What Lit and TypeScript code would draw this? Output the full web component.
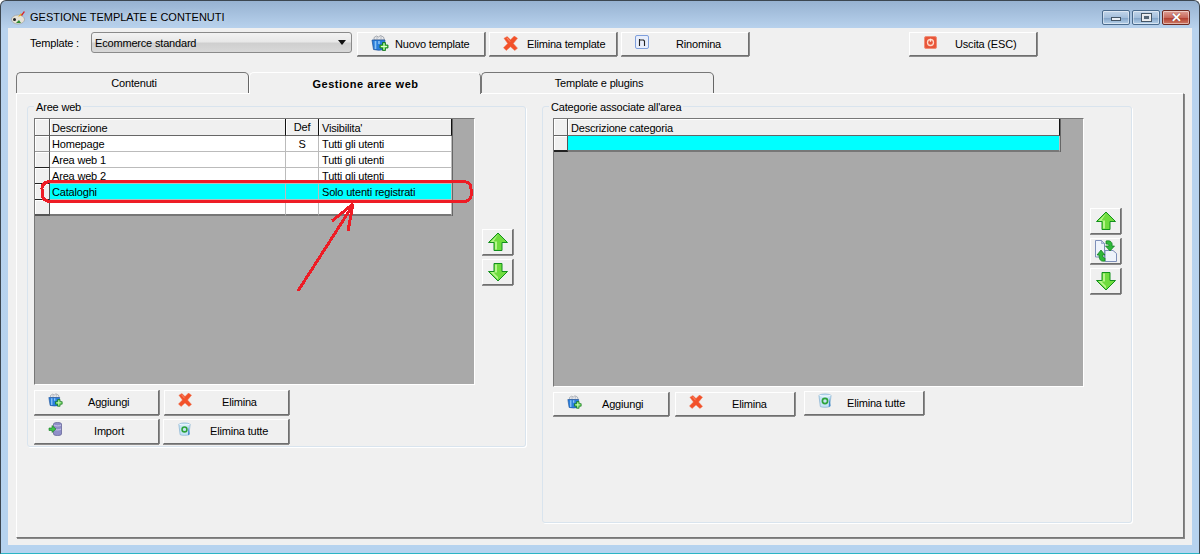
import { LitElement, html, css, svg } from "lit";
import { customElement } from "lit/decorators.js";

const icons: Record<string, any> = {
  box: svg`<svg class="ico" width="18" height="16" viewBox="0 0 18 16"><path d="M3 5V2.500l2.500-1.500 2 1 2-1.500 3 1.500 1 3z" fill="#e6e8ec" stroke="#8a8f98" stroke-width=".7"/><path d="M6 1.500v3M10 1v3" stroke="#a9adb5" stroke-width=".8"/><path d="M1 5h13l-1 9.500q-5 1.500-10.500 0z" fill="#2b7fdc" stroke="#1b4f96" stroke-width=".7"/><path d="M4.500 6v8M8 6v3" stroke="#8cc4f4" stroke-width="1.600"/><path d="M11.500 7.500h3v2.500H17v3h-2.500v2.500h-3V13H9v-3h2.500z" fill="#5ad24a" stroke="#0d6e18" stroke-width=".8"/><path d="M12.500 8.500h1v2.500h2.500v1h-2.500v2.500h-1V12H10v-1h2.500z" fill="#e0fbd0"/></svg>`,
  x: svg`<svg class="ico" width="16" height="16" viewBox="0 0 16 16"><path d="M1 2.500L4.500 .5 8 4l4-4 3.500 2.500L11 8l4.500 5-3 2.500L8 11.500l-4.500 4L.5 12.500 5 8z" fill="#f2512a" stroke="#f07a58" stroke-width=".5"/><path d="M4 2l3.500 4" stroke="#f9967a" stroke-width="1"/></svg>`,
  n: svg`<svg class="ico" width="14" height="14" viewBox="0 0 14 14"><rect x=".5" y=".5" width="13" height="13" rx="1.500" fill="#e8eefb" stroke="#7f9fdc"/><path d="M4.500 4v7M4.500 5h4l1 1v5" fill="none" stroke="#222" stroke-width="1.100"/></svg>`,
  exit: svg`<svg class="ico" width="13" height="13" viewBox="0 0 13 13"><rect x=".5" y=".5" width="12" height="12" rx="1.500" fill="#e8563a" stroke="#ef8f78"/><circle cx="6.500" cy="6.500" r="3" fill="none" stroke="#ffd9c8" stroke-width="1.300"/><path d="M6.500 2.800v3" stroke="#ffe8dc" stroke-width="1.300"/></svg>`,
  db: svg`<svg class="ico" width="14" height="14" viewBox="0 0 14 14"><path d="M5 2c0-2 8-2 8 0v10c0 2-8 2-8 0z" fill="#8f8fc8" stroke="#5c5c90" stroke-width=".7"/><path d="M5.500 3c1 1.200 6 1.200 7 0M5.500 7c1 1.200 6 1.200 7 0" fill="none" stroke="#d8d8f0" stroke-width=".8"/><path d="M.5 6h3V3.500l4 3.500-4 3.500V8.500h-3z" fill="#3fc24a" stroke="#137a20" stroke-width=".6"/></svg>`,
  trash: svg`<svg class="ico" width="14" height="15" viewBox="0 0 15 16"><path d="M1 2.500c3-2 10-2 13 0l-1.500 12c-2 1-8 1-10 0z" fill="#c6e4f6" stroke="#7aa9cc" stroke-width=".7"/><path d="M1.500 2.500c3 1.200 9 1.200 12 0" fill="none" stroke="#fff" stroke-width="1"/><circle cx="7.500" cy="8.500" r="2.800" fill="none" stroke="#2da33a" stroke-width="1.800"/><path d="M12 5l1.500 9-2 1z" fill="#3f87cc"/></svg>`,
  up: svg`<svg class="ico" width="20" height="20" viewBox="0 0 20 20"><path d="M10 1l9.500 9.500h-5.500v8h-8v-8H.5z" fill="#6fdc3e" stroke="#12911c" stroke-width="1"/><path d="M10 2.500L2.500 10h4.500v7.500H9V9.500H5.500z" fill="#b7f58c"/></svg>`,
  down: svg`<svg class="ico" width="20" height="20" viewBox="0 0 20 20"><path d="M10 19l9.500-9.500h-5.500v-8h-8v8H.5z" fill="#6fdc3e" stroke="#12911c" stroke-width="1"/><path d="M7 2.500h2v8H5.500L10 15V17.500L2.500 10H7z" fill="#b7f58c"/></svg>`,
  swap: svg`<svg class="ico" width="22" height="22" viewBox="0 0 22 22"><path d="M.5.5h6l3 3v13.500h-9z" fill="#eef3fb" stroke="#7d8fb8"/><path d="M6.500.5v3h3z" fill="#c2cde4" stroke="#7d8fb8" stroke-width=".6"/><path d="M10 10.500h8l3.500 3v8H10z" fill="#eef3fb" stroke="#7d8fb8"/><path d="M11 1c4-1 7 1 6 5h2.500l-4.500 5-4.500-5H14c0-1.500-1-2-3-2z" fill="#2fb83a" stroke="#107a1c" stroke-width=".7"/><path d="M10 21c-4 1-6-1-6-6H2l4-5 4 5H7.500c0 2 1 3 2.500 3z" fill="#2fb83a" stroke="#107a1c" stroke-width=".7"/></svg>`,
  app: svg`<svg width="16" height="16" viewBox="0 0 16 16"><ellipse cx="8" cy="9.500" rx="6.500" ry="4.500" fill="#e6e2d6" stroke="#888" stroke-width=".5"/><circle cx="4.500" cy="9.500" r="1.500" fill="#222"/><path d="M6 13l3-3 2 3z" fill="#2b8a2f"/><path d="M8 7l3-4 1 2z" fill="#e8b020"/><path d="M11 5l3-4 .8 1-2.800 4z" fill="#d8202a"/></svg>`,
};

const btn = (cls: string, icon: string, label: string) => html`
  <div class="btn ${cls}"><span class="bi">${icons[icon]}</span><span class="bl">${label}</span></div>`;

@customElement("app-root")
export class AppRoot extends LitElement {
  static styles = css`
    :host { display: block; width: 1200px; height: 554px; overflow: hidden; position: relative;
      font: 11px "Liberation Sans", Arial, sans-serif; letter-spacing: -.18px; color: #000; }
    .win { height: 554px; box-sizing: border-box; display: flex; flex-direction: column;
      background: linear-gradient(180deg, #97b2d1 0, #b9d3ee 28px, #b6d3ef 100%);
      border: 1px solid #3c4650; border-bottom-color: #2bb4c4; border-radius: 6px 6px 0 0; }
    .title { height: 27px; flex: none; display: flex; align-items: center; padding: 0 6px 0 9px; }
    .title svg { margin-right: 4px; margin-top: 6px; }
    .title .t { flex: 1; margin-top: 4px; letter-spacing: 0; text-shadow: 0 0 6px rgba(255,255,255,.6); }
    .wbs { display: flex; gap: 2px; margin-top: 6px; margin-right: 3px; }
    .wb { width: 26px; height: 13px; border: 1px solid #4a6a8c; border-radius: 2px; display: flex; align-items: center; justify-content: center;
      background: linear-gradient(180deg, #c3d6ea 0, #a4bfdc 50%, #7fa1c6 51%, #b8d2ea 100%); box-shadow: inset 0 0 0 1px rgba(255,255,255,.45); }
    .wb.close { border-color: #6e2a22; background: linear-gradient(180deg, #e0a198 0, #c9695c 50%, #b03a2c 51%, #cf7a66 100%); }
    .wb i { display: block; box-sizing: border-box; }
    .min { width: 10px; height: 4px; background: #e8eef5; border: 1px solid #456; margin-top: 3px; }
    .max { width: 11px; height: 9px; background: #dfe6ee; border: 1px solid #456; box-shadow: inset 0 0 0 1px #eee; }
    .max::after { content: ""; display: block; width: 5px; height: 3px; margin: 2px 2px; background: #567; }
    .cx { color: #fff; font: bold 13px/12px "Liberation Sans"; text-shadow: 0 0 1px #5a1a12; }
    .client { margin: 0 7px 8px 7px; flex: 1; background: #f0f0f0; display: flex; flex-direction: column; min-height: 0; }
    .toolbar { display: flex; align-items: flex-start; padding: 4px 0 0 22px; height: 40px; flex: none; }
    .tl { width: 61px; line-height: 22px; }
    .select { width: 261px; height: 21px; box-sizing: border-box; border: 1px solid #8a8a8a; border-radius: 3px;
      background: linear-gradient(180deg, #f3f3f3 0, #e8e8e8 45%, #cfcfcf 55%, #d8d8d8 100%); display: flex; align-items: center; padding: 0 3px; margin-right: 5px; justify-content: space-between; }
    .arrow { width: 0; height: 0; border: 4px solid transparent; border-top: 5px solid #111; border-bottom: 0; margin-right: 2px; }
    .btn { box-sizing: border-box; display: flex; align-items: center; background: #f0f0f0; white-space: nowrap; padding-left: 13px;
      border: 1px solid; border-color: #fff #6f6f6f #6f6f6f #fff; box-shadow: 0 1px 0 #8c8c8c, 1px 0 0 #8c8c8c; padding-bottom: 1px; }
    .bi { display: flex; align-items: center; justify-content: center; flex: none; }
    .bl { flex: none; }
    .tb1, .tb2, .tb3, .tb4 { width: 128px; height: 24px; margin-right: 4px; }
    .tb1 { gap: 6px; }
    .tb1 .bi { margin-top: -2px; }
    .tb2 { gap: 9px; }
    .tb2 .ico { width: 15px; height: 15px; }
    .tb3 { gap: 27px; margin-right: 160px; }
    .tb3 .bi { margin-top: -4px; }
    .tb4 { gap: 18px; padding-left: 14px; margin-right: 0; }
    .tb4 .bi { margin-top: -3px; }
    .tabs { display: flex; padding-left: 8px; height: 21px; flex: none; position: relative; z-index: 1; }
    .tab { width: 233px; box-sizing: border-box; height: 21px; border: 1px solid #777; border-bottom: 0; border-radius: 5px 5px 0 0;
      border-color: #777 #666 #fff #777; text-align: center; line-height: 20px; padding-left: 3px; }
    .tab.on { width: 232px; height: 22px; padding-left: 1px; background: #f0f0f0; border-color: #fff #777 #f0f0f0 #fff; font-weight: bold; letter-spacing: .52px; line-height: 22px; }
    .panel { margin: 0 8px 7px 8px; flex: 1; box-sizing: border-box; border: 1px solid; border-color: #fff #777 #777 #fff; box-shadow: 1px 1px 0 #888; display: flex; padding: 12px 0 0 10px; min-height: 0; }
    .g { border: 1px solid #d9e4ee; border-radius: 3px; box-sizing: border-box; position: relative; box-shadow: 1px 1px 0 #fff; }
    .g1 { width: 499px; height: 341px; margin-right: 16px; display: flex; flex-direction: column; }
    .g2 { width: 590px; height: 417px; display: flex; flex-direction: column; }
    .lg { position: absolute; top: -6px; left: 6px; background: #f0f0f0; padding: 0 2px; line-height: 13px; }
    .grid { background: #a9a9a9; box-sizing: border-box; border: 1px solid; border-color: #777 #fff #fff #777; }
    .g1 .grid { width: 441px; height: 267px; }
    .g2 .grid { width: 531px; height: 269px; }
    .g1 .gw { padding: 11px 0 0 6px; display: flex; align-items: flex-start; }
    .g2 .gw { padding: 11px 0 0 10px; display: flex; align-items: flex-start; }
    table { border-collapse: separate; border-spacing: 0; table-layout: fixed; border-right: 1px solid #666; }
    td, th { box-sizing: border-box; padding: 0 0 0 2px; height: 16px; font-weight: normal; text-align: left; line-height: 14px; overflow: hidden; white-space: nowrap; background: #fff; border-right: 1px solid #bbb; border-bottom: 1px solid #bbb; }
    th { background: #f0f0f0; height: 17px; padding-top: 1px; border-right: 1px solid #111; border-bottom: 1px solid #666; box-shadow: inset 1px 1px 0 #fff; }
    td.ind { background: #f0f0f0; border-right: 1px solid #555; border-bottom: 1px solid #222; box-shadow: inset 1px 1px 0 #fff; padding: 0; }
    th.ind { border-right: 1px solid #555; padding: 0; }
    tr:first-child + tr td.ind { border-bottom-color: #999; }
    tr:last-child td { border-bottom: 2px solid #777; }
    tr:last-child td.ind { border-bottom: 2px solid #555; }
    .g2 tr:last-child td.ind { border-bottom: 2px solid #222; }
    tr.sel td:not(.ind) { background: #00ffff; }
    .c { text-align: center; padding: 0; }
    .ind { width: 15px; } .d { width: 236px; } .df { width: 33px; } .v { width: 133px; padding-left: 3px; }
    .g2 .ind { width: 14px; }
    .dc { width: 492px; padding-left: 3px; }
    .btm { display: grid; grid-template-columns: 125px 125px; gap: 4px 5px; padding: 5px 0 0 6px; }
    .btm .btn { height: 25px; }
    .btm .bi, .btm2 .bi { margin-top: -4px; }
    .btm .ico, .btm2 .box-i .ico { width: 15px; height: 14px; }
    .btm .x-i .ico, .btm2 .x-i .ico { width: 14px; height: 14px; }
    .b-add { gap: 25px; }
    .b-del { gap: 30px; }
    .b-imp { gap: 31px; }
    .b-all { gap: 18px; margin-left: -1px; }
    .btm2 { display: flex; padding: 5px 0 0 10px; align-items: flex-start; }
    .btm2 .btn { height: 24px; }
    .btm2 .box-i { gap: 20px; width: 116px; margin-right: 6px; }
    .btm2 .x-i { gap: 29px; width: 120px; margin-right: 9px; }
    .btm2 .c2 { gap: 15px; width: 120px; margin-top: -1px; }
    .arrows { display: flex; flex-direction: column; gap: 4px; }
    .g1 .arrows { margin: 111px 0 0 7px; }
    .g2 .arrows { margin: 90px 0 0 6px; }
    .ab { width: 31px; height: 26px; box-sizing: border-box; display: flex; align-items: center; justify-content: center; background: #f0f0f0;
      border: 1px solid; border-color: #fff #6f6f6f #6f6f6f #fff; box-shadow: 0 1px 0 #8c8c8c, 1px 0 0 #8c8c8c; }
    .over { position: absolute; left: 0; top: 0; pointer-events: none; shape-rendering: crispEdges; }
  `;

  rows = [
    ["Homepage", "S", "Tutti gli utenti"],
    ["Area web 1", "", "Tutti gli utenti"],
    ["Area web 2", "", "Tutti gli utenti"],
    ["Cataloghi", "", "Solo utenti registrati"],
    ["", "", ""],
  ];

  render() {
    return html`
      <div class="win">
        <div class="title">
          ${icons.app}
          <span class="t">GESTIONE TEMPLATE E CONTENUTI</span>
          <div class="wbs">
            <div class="wb"><i class="min"></i></div>
            <div class="wb"><i class="max"></i></div>
            <div class="wb close"><span class="cx">✕</span></div>
          </div>
        </div>
        <div class="client">
          <div class="toolbar">
            <span class="tl">Template :</span>
            <div class="select"><span>Ecommerce standard</span><i class="arrow"></i></div>
            ${btn("tb1", "box", "Nuovo template")}
            ${btn("tb2", "x", "Elimina template")}
            ${btn("tb3", "n", "Rinomina")}
            ${btn("tb4", "exit", "Uscita (ESC)")}
          </div>
          <div class="tabs">
            <div class="tab">Contenuti</div>
            <div class="tab on">Gestione aree web</div>
            <div class="tab">Template e plugins</div>
          </div>
          <div class="panel">
            <div class="g g1">
              <span class="lg">Aree web</span>
              <div class="gw">
                <div class="grid">
                  <table>
                    <tr><th class="ind"></th><th class="d">Descrizione</th><th class="df c">Def</th><th class="v">Visibilita'</th></tr>
                    ${this.rows.map((r, i) => html`<tr class=${i === 3 ? "sel" : ""}><td class="ind"></td><td class="d">${r[0]}</td><td class="df c">${r[1]}</td><td class="v">${r[2]}</td></tr>`)}
                  </table>
                </div>
                <div class="arrows">
                  <div class="ab">${icons.up}</div>
                  <div class="ab">${icons.down}</div>
                </div>
              </div>
              <div class="btm">
                ${btn("b-add", "box", "Aggiungi")}
                ${btn("b-del x-i", "x", "Elimina")}
                ${btn("b-imp", "db", "Import")}
                ${btn("b-all", "trash", "Elimina tutte")}
              </div>
            </div>
            <div class="g g2">
              <span class="lg">Categorie associate all'area</span>
              <div class="gw">
                <div class="grid">
                  <table>
                    <tr><th class="ind"></th><th class="dc">Descrizione categoria</th></tr>
                    <tr class="sel"><td class="ind"></td><td class="dc"></td></tr>
                  </table>
                </div>
                <div class="arrows">
                  <div class="ab">${icons.up}</div>
                  <div class="ab">${icons.swap}</div>
                  <div class="ab">${icons.down}</div>
                </div>
              </div>
              <div class="btm2">
                ${btn("box-i", "box", "Aggiungi")}
                ${btn("x-i", "x", "Elimina")}
                ${btn("c2", "trash", "Elimina tutte")}
              </div>
            </div>
          </div>
        </div>
      </div>
      <svg class="over" width="1200" height="554" fill="none" stroke="#ee1c25" stroke-width="3">
        <path d="M52 181.500H462q9 0 9 7v7q0 6-9 6H52q-10 0-10-8v-5q0-7 10-7z"/>
        <path d="M298 291L353 205M353 204L332 221M353 204L348 231"/>
      </svg>
    `;
  }
}
